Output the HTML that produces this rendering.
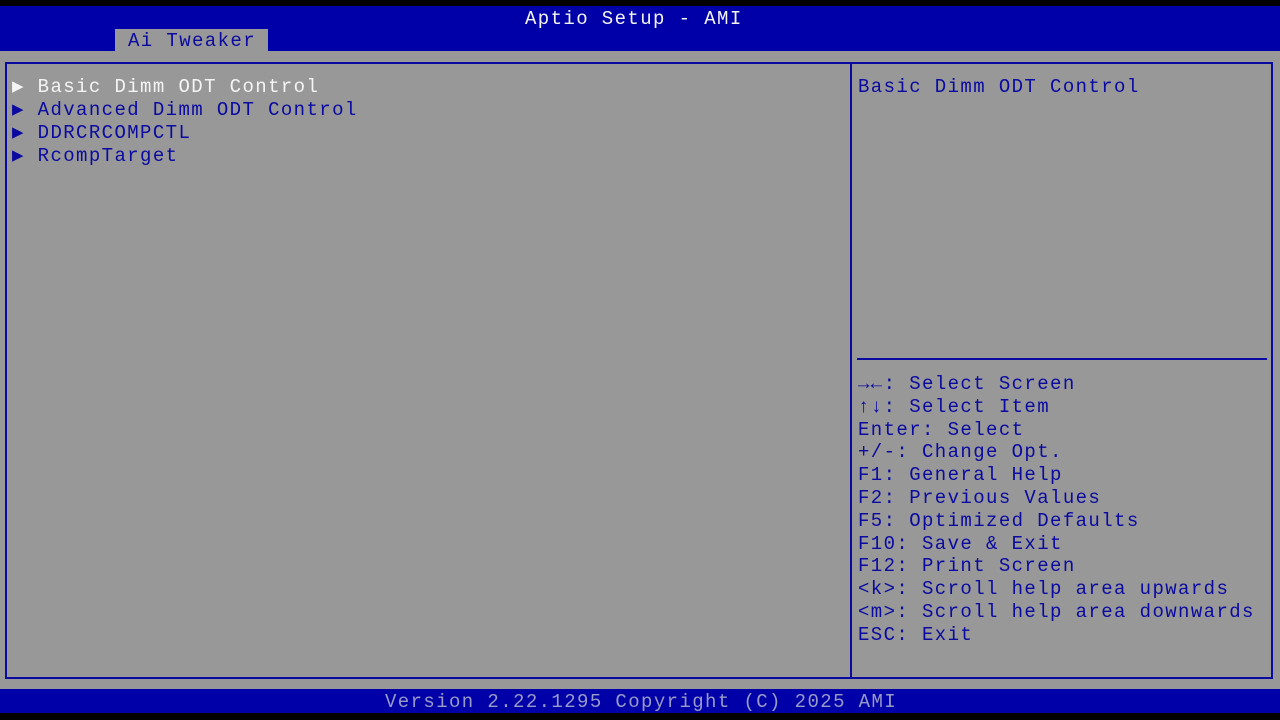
<!DOCTYPE html>
<html><head><style>
body{margin:0;width:1280px;height:720px;background:#000;position:relative;overflow:hidden;font-family:"Liberation Mono","DejaVu Sans Mono",monospace;font-size:19px;letter-spacing:1.4px;}
.a{position:absolute;white-space:pre;line-height:23px;}
.b{color:#0a0aa0}.w{color:#f4f4f4}
</style></head><body>
<div style="position:absolute;left:0;top:6px;width:1280px;height:45px;background:#0000a8"></div>
<div class="a w" style="left:525px;top:8px">Aptio Setup - AMI</div>
<div style="position:absolute;left:115px;top:29px;width:153px;height:22px;background:#989898"></div>
<div class="a b" style="left:128px;top:30px">Ai Tweaker</div>
<div style="position:absolute;left:0;top:51px;width:1280px;height:638px;background:#989898"></div>
<div style="position:absolute;left:5px;top:62px;width:1264px;height:613px;border:2px solid #0a0aa0"></div>
<div style="position:absolute;left:850px;top:62px;width:2px;height:617px;background:#0a0aa0"></div>
<div style="position:absolute;left:857px;top:358px;width:410px;height:2px;background:#0a0aa0"></div>
<div class="a w" style="left:12px;top:76px">▶ Basic Dimm ODT Control</div>
<div class="a b" style="left:12px;top:99px">▶ Advanced Dimm ODT Control
▶ DDRCRCOMPCTL
▶ RcompTarget</div>
<div class="a b" style="left:858px;top:76px">Basic Dimm ODT Control</div>
<div class="a b" style="left:858px;top:373px;line-height:22.8px"><b>→←</b>: Select Screen
<b>↑↓</b>: Select Item
Enter: Select
+/-: Change Opt.
F1: General Help
F2: Previous Values
F5: Optimized Defaults
F10: Save &amp; Exit
F12: Print Screen
&lt;k&gt;: Scroll help area upwards
&lt;m&gt;: Scroll help area downwards
ESC: Exit</div>
<div style="position:absolute;left:0;top:689px;width:1280px;height:24px;background:#0000a8"></div>
<div class="a" style="left:385px;top:691px;color:#9a9ac8">Version 2.22.1295 Copyright (C) 2025 AMI</div>
</body></html>
